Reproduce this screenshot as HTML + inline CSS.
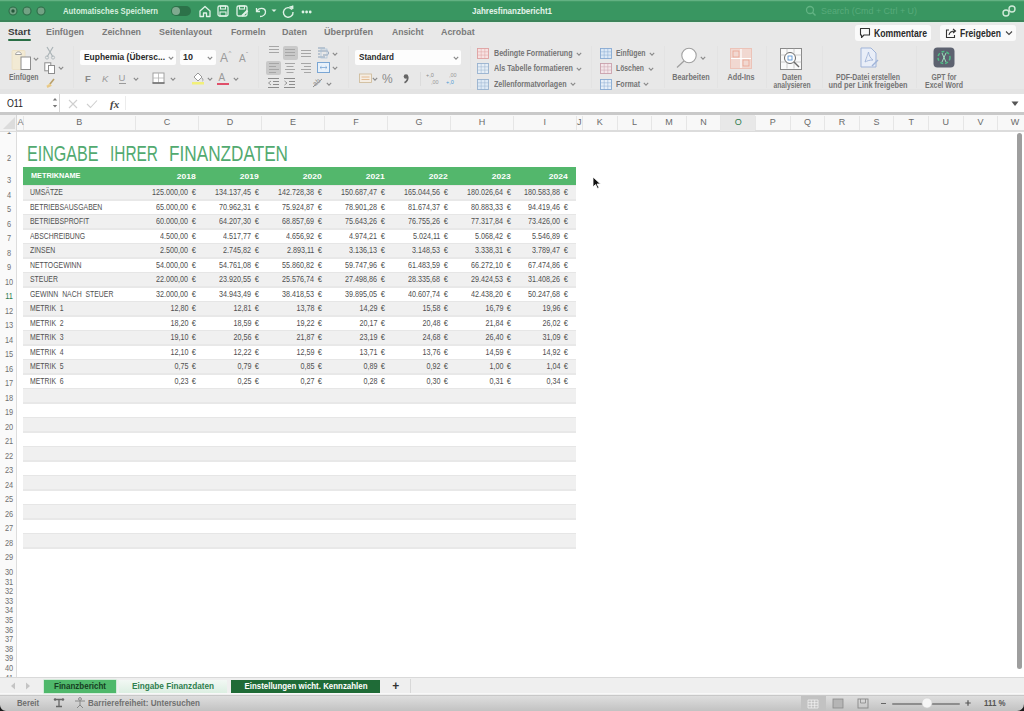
<!DOCTYPE html><html><head><meta charset="utf-8"><title>Jahresfinanzbericht1</title><style>
*{box-sizing:border-box}
html,body{margin:0;padding:0}
body{width:1024px;height:711px;overflow:hidden;position:relative;background:#fff;font-family:"Liberation Sans",sans-serif;color:#333}
.a{position:absolute}
.t{position:absolute;white-space:pre;line-height:1}
svg{position:absolute;overflow:visible}
</style></head><body>
<div class="a" style="left:0px;top:0px;width:1024px;height:22px;background:#399661;"></div>
<div class="a" style="left:0px;top:0px;width:1024px;height:1px;background:#62b182;"></div>
<div class="a" style="left:0px;top:1px;width:1024px;height:1px;background:#449c68;"></div>
<div class="a" style="left:0px;top:20px;width:1024px;height:1.5px;background:#3c835a;"></div>
<svg style="left:7px;top:5px;" width="12" height="12" viewBox="0 0 12 12"><circle cx="6" cy="6" r="4" fill="#72a284" stroke="#2e6c48" stroke-width="1.1"/><circle cx="6" cy="6" r="1.7" fill="#24573a"/></svg>
<svg style="left:21px;top:5px;" width="12" height="12" viewBox="0 0 12 12"><circle cx="6" cy="6" r="4" fill="#72a284" stroke="#2e6c48" stroke-width="1.1"/></svg>
<svg style="left:35px;top:5px;" width="12" height="12" viewBox="0 0 12 12"><circle cx="6" cy="6" r="4" fill="#72a284" stroke="#2e6c48" stroke-width="1.1"/></svg>
<div class="t" style="top:6.95px;font-size:8.5px;color:#d6efdf;font-weight:bold;left:63px;transform:scaleX(0.91);transform-origin:left center;">Automatisches Speichern</div>
<div class="a" style="left:171px;top:6px;width:20px;height:10px;background:#2c7249;border-radius:5px;"></div>
<svg style="left:171px;top:6px;" width="20" height="10" viewBox="0 0 20 10"><circle cx="5" cy="5" r="4" fill="#7faa8f"/></svg>
<svg style="left:198px;top:4px;" width="14" height="14" viewBox="0 0 14 14"><path d="M2 7 L7 2.5 L12 7 V12.5 H8.5 V9 H5.5 V12.5 H2 Z" fill="none" stroke="#dff2e6" stroke-width="1.3" stroke-linejoin="round"/></svg>
<svg style="left:216px;top:4px;" width="14" height="14" viewBox="0 0 14 14"><rect x="2" y="2" width="10" height="10" rx="1.5" fill="none" stroke="#dff2e6" stroke-width="1.3"/><rect x="4.5" y="2" width="5" height="3" fill="none" stroke="#dff2e6" stroke-width="1.1"/><rect x="4" y="8" width="6" height="4" fill="none" stroke="#dff2e6" stroke-width="1.1"/></svg>
<svg style="left:235px;top:4px;" width="14" height="14" viewBox="0 0 14 14"><rect x="2" y="2" width="10" height="10" rx="1.5" fill="none" stroke="#dff2e6" stroke-width="1.3"/><rect x="4.5" y="2" width="5" height="3" fill="none" stroke="#dff2e6" stroke-width="1.1"/><path d="M7 12 L12.5 6.5" stroke="#dff2e6" stroke-width="2.2"/></svg>
<svg style="left:253px;top:4px;" width="16" height="14" viewBox="0 0 16 14"><path d="M3.5 4 V7.5 H7" fill="none" stroke="#dff2e6" stroke-width="1.3"/><path d="M4 7 C6 3.5 12 3.5 12.5 7.5 C12.8 10.5 10 12.5 7 12.5" fill="none" stroke="#dff2e6" stroke-width="1.3"/></svg>
<svg style="left:271px;top:9px;" width="6" height="4" viewBox="0 0 6 4"><path d="M0.5 0.5 L3 3 L5.5 0.5 Z" fill="#dff2e6"/></svg>
<svg style="left:281px;top:4px;" width="14" height="14" viewBox="0 0 14 14"><path d="M11 5.5 A4.8 4.8 0 1 0 12 8" fill="none" stroke="#dff2e6" stroke-width="1.4"/><path d="M8.5 2.5 L12 5 L12 1.5" fill="#dff2e6" stroke="#dff2e6" stroke-width="0.8"/></svg>
<svg style="left:300px;top:9.5px;" width="14" height="4" viewBox="0 0 14 4"><circle cx="3" cy="2" r="1.4" fill="#dff2e6"/><circle cx="6.6" cy="2" r="1.4" fill="#dff2e6"/><circle cx="10.2" cy="2" r="1.4" fill="#dff2e6"/></svg>
<div class="t" style="top:7.00px;font-size:8.5px;color:#e4f3ea;font-weight:bold;left:471.6px;transform:scaleX(0.9408);transform-origin:left center;">Jahresfinanzbericht1</div>
<svg style="left:805px;top:5px;" width="12" height="12" viewBox="0 0 12 12"><circle cx="5" cy="5" r="3.5" fill="none" stroke="#62b383" stroke-width="1.3"/><path d="M7.5 7.5 L10.5 10.5" stroke="#62b383" stroke-width="1.4"/></svg>
<div class="t" style="top:7.00px;font-size:8.5px;color:#58ab7b;font-weight:normal;left:821px;transform:scaleX(1.0476);transform-origin:left center;">Search (Cmd + Ctrl + U)</div>
<svg style="left:1001px;top:4px;" width="16" height="14" viewBox="0 0 16 14"><circle cx="5" cy="9" r="3" fill="none" stroke="#cfe9d8" stroke-width="1.4"/><circle cx="11" cy="5" r="3" fill="none" stroke="#cfe9d8" stroke-width="1.4"/></svg>
<div class="a" style="left:0px;top:22px;width:1024px;height:67px;background:#e8e8e8;"></div>
<div class="a" style="left:0px;top:21.5px;width:1024px;height:1.5px;background:#e0eee5;"></div>
<div class="a" style="left:0px;top:88.5px;width:1024px;height:6px;background:#e3e3e3;"></div>
<div class="t" style="top:26.70px;font-size:9.5px;color:#3d3d3d;font-weight:bold;left:8px;transform:scaleX(1.039);transform-origin:left center;">Start</div>
<div class="t" style="top:26.70px;font-size:9.5px;color:#7a7a7a;font-weight:bold;left:46px;transform:scaleX(0.935);transform-origin:left center;">Einfügen</div>
<div class="t" style="top:26.70px;font-size:9.5px;color:#7a7a7a;font-weight:bold;left:102px;transform:scaleX(0.9352);transform-origin:left center;">Zeichnen</div>
<div class="t" style="top:26.70px;font-size:9.5px;color:#7a7a7a;font-weight:bold;left:159px;transform:scaleX(0.9381);transform-origin:left center;">Seitenlayout</div>
<div class="t" style="top:26.70px;font-size:9.5px;color:#7a7a7a;font-weight:bold;left:230.5px;transform:scaleX(0.9204);transform-origin:left center;">Formeln</div>
<div class="t" style="top:26.70px;font-size:9.5px;color:#7a7a7a;font-weight:bold;left:282px;transform:scaleX(0.9467);transform-origin:left center;">Daten</div>
<div class="t" style="top:26.70px;font-size:9.5px;color:#7a7a7a;font-weight:bold;left:324px;transform:scaleX(0.957);transform-origin:left center;">Überprüfen</div>
<div class="t" style="top:26.70px;font-size:9.5px;color:#7a7a7a;font-weight:bold;left:391.5px;transform:scaleX(0.904);transform-origin:left center;">Ansicht</div>
<div class="t" style="top:26.70px;font-size:9.5px;color:#7a7a7a;font-weight:bold;left:441px;transform:scaleX(0.9358);transform-origin:left center;">Acrobat</div>
<div class="a" style="left:8px;top:39.2px;width:22.5px;height:2px;background:#2a6e45;border-radius:1px;"></div>
<div class="a" style="left:854.5px;top:25px;width:76px;height:15.5px;background:#fafafa;border-radius:3px;"></div>
<div class="a" style="left:939.5px;top:25px;width:76px;height:15.5px;background:#fafafa;border-radius:3px;"></div>
<svg style="left:859px;top:27px;" width="12" height="12" viewBox="0 0 12 12"><path d="M1.5 1.5 H10.5 V8 H5 L2.5 10.5 V8 H1.5 Z" fill="none" stroke="#333" stroke-width="1.1" stroke-linejoin="round"/></svg>
<div class="t" style="top:29.30px;font-size:10px;color:#2a2a2a;font-weight:bold;left:874px;transform:scaleX(0.8669);transform-origin:left center;">Kommentare</div>
<svg style="left:945px;top:27px;" width="12" height="12" viewBox="0 0 12 12"><path d="M4 3 H1.5 V10.5 H9.5 V8" fill="none" stroke="#333" stroke-width="1.1"/><path d="M4 8 C4.5 5 6.5 4 10 4 M8 2 L10.5 4 L8 6" fill="none" stroke="#333" stroke-width="1.1"/></svg>
<div class="t" style="top:29.30px;font-size:10px;color:#2a2a2a;font-weight:bold;left:960px;transform:scaleX(0.8578);transform-origin:left center;">Freigeben</div>
<svg style="left:1005px;top:30px;" width="8" height="6" viewBox="0 0 8 6"><path d="M1 1.5 L4 4.5 L7 1.5" fill="none" stroke="#444" stroke-width="1.1"/></svg>
<svg style="left:10px;top:48px;" width="24" height="24" viewBox="0 0 24 24"><rect x="2" y="2.5" width="13" height="19" rx="1" fill="#f2ead4" stroke="#ece0c2" stroke-width="0.8"/><path d="M5.5 6.5 C6 3 11 3 11.5 6.5 Z" fill="#fff" stroke="#9a9a9a" stroke-width="0.9"/><rect x="11" y="9" width="9.5" height="12.5" fill="#fff" stroke="#8d8d8d" stroke-width="1"/></svg>
<svg style="left:33px;top:57px;" width="6" height="4" viewBox="0 0 6 4"><path d="M0.8 0.8 L3 3.2 L5.2 0.8" fill="none" stroke="#8a8a8a" stroke-width="1.1"/></svg>
<div class="t" style="top:73.20px;font-size:9px;color:#747474;font-weight:bold;left:8.5px;transform:scaleX(0.7662);transform-origin:left center;">Einfügen</div>
<svg style="left:44px;top:46px;" width="12" height="14" viewBox="0 0 12 14"><path d="M3 1 L9 11 M9 1 L3 11" stroke="#aab3b6" stroke-width="1.2"/><circle cx="3" cy="11.5" r="1.6" fill="none" stroke="#b5bdc0"/><circle cx="9" cy="11.5" r="1.6" fill="none" stroke="#b5bdc0"/></svg>
<svg style="left:44px;top:62px;" width="14" height="12" viewBox="0 0 14 12"><rect x="0.8" y="0.8" width="6" height="8" fill="#fff" stroke="#8d8d8d" stroke-width="1"/><rect x="4.5" y="3.5" width="6" height="8" fill="#fff" stroke="#8d8d8d" stroke-width="1"/></svg>
<svg style="left:58px;top:66px;" width="6" height="4" viewBox="0 0 6 4"><path d="M0.8 0.8 L3 3.2 L5.2 0.8" fill="none" stroke="#8a8a8a" stroke-width="1.1"/></svg>
<svg style="left:44px;top:77px;" width="13" height="12" viewBox="0 0 13 12"><path d="M2 9 L6 6 L8 9 Z" fill="#f0d9a0"/><path d="M6 7 L10 2" stroke="#b9a06a" stroke-width="1.6"/><path d="M3 10 L7 8" stroke="#e8c887" stroke-width="2"/></svg>
<div class="a" style="left:72.5px;top:46px;width:1px;height:42px;background:#e3e3e3;"></div>
<div class="a" style="left:80px;top:49.5px;width:96px;height:15px;background:#fdfdfd;border-radius:2px;"></div>
<div class="t" style="top:52.00px;font-size:9.5px;color:#2a2a2a;font-weight:bold;left:84px;transform:scaleX(0.8868);transform-origin:left center;">Euphemia (Übersc...</div>
<svg style="left:168px;top:55.5px;" width="6" height="4" viewBox="0 0 6 4"><path d="M0.8 0.8 L3 3.2 L5.2 0.8" fill="none" stroke="#888" stroke-width="1.1"/></svg>
<div class="a" style="left:179.5px;top:49.5px;width:36px;height:15px;background:#fdfdfd;border-radius:2px;"></div>
<div class="t" style="top:52.00px;font-size:9.5px;color:#2a2a2a;font-weight:bold;left:183px;transform:scaleX(0.9453);transform-origin:left center;">10</div>
<svg style="left:207px;top:55.5px;" width="6" height="4" viewBox="0 0 6 4"><path d="M0.8 0.8 L3 3.2 L5.2 0.8" fill="none" stroke="#888" stroke-width="1.1"/></svg>
<div class="t" style="top:52.00px;font-size:12px;color:#9a9a9a;font-weight:normal;left:220px;">A</div>
<div class="t" style="top:49.50px;font-size:6px;color:#9a9a9a;font-weight:normal;left:228.5px;">^</div>
<div class="t" style="top:54.00px;font-size:10px;color:#9a9a9a;font-weight:normal;left:239px;">A</div>
<div class="t" style="top:50.50px;font-size:6px;color:#9a9a9a;font-weight:normal;left:246px;">ˇ</div>
<div class="t" style="top:73.50px;font-size:9.5px;color:#8a8a8a;font-weight:bold;left:85px;">F</div>
<div class="t" style="top:73.50px;font-size:9.5px;color:#9a9a9a;font-weight:normal;font-style:italic;left:102px;">K</div>
<div class="t" style="top:72.50px;font-size:9.5px;color:#9a9a9a;font-weight:normal;left:118.5px;">U</div>
<div class="a" style="left:118.5px;top:83px;width:7px;height:1px;background:#9a9a9a;"></div>
<svg style="left:133px;top:77px;" width="6" height="4" viewBox="0 0 6 4"><path d="M0.8 0.8 L3 3.2 L5.2 0.8" fill="none" stroke="#8a8a8a" stroke-width="1.1"/></svg>
<svg style="left:152px;top:72px;" width="14" height="12" viewBox="0 0 14 12"><rect x="1" y="1" width="11" height="10" fill="#fff" stroke="#9a9a9a" stroke-width="0.9"/><path d="M6.5 1 V11 M1 6 H12" stroke="#b5b5b5" stroke-width="0.8"/><path d="M0.5 11 H12.5" stroke="#666" stroke-width="1.4"/></svg>
<svg style="left:170px;top:77px;" width="6" height="4" viewBox="0 0 6 4"><path d="M0.8 0.8 L3 3.2 L5.2 0.8" fill="none" stroke="#8a8a8a" stroke-width="1.1"/></svg>
<svg style="left:191px;top:71px;" width="14" height="14" viewBox="0 0 14 14"><path d="M3 6 L7 2 L11 6 L7 10 Z" fill="#fff" stroke="#9a9a9a" stroke-width="1"/><path d="M11 7 C12 8.5 12.5 9.5 11.5 10" stroke="#9a9a9a" fill="none"/><rect x="1" y="11" width="12" height="2.5" fill="#f2f07a"/></svg>
<svg style="left:207px;top:77px;" width="6" height="4" viewBox="0 0 6 4"><path d="M0.8 0.8 L3 3.2 L5.2 0.8" fill="none" stroke="#8a8a8a" stroke-width="1.1"/></svg>
<div class="t" style="top:73.00px;font-size:10px;color:#9a9a9a;font-weight:normal;left:218.5px;">A</div>
<div class="a" style="left:217px;top:83px;width:12px;height:2px;background:#e0506a;"></div>
<svg style="left:233px;top:77px;" width="6" height="4" viewBox="0 0 6 4"><path d="M0.8 0.8 L3 3.2 L5.2 0.8" fill="none" stroke="#8a8a8a" stroke-width="1.1"/></svg>
<div class="a" style="left:258px;top:46px;width:1px;height:42px;background:#e3e3e3;"></div>
<div class="a" style="left:283px;top:46px;width:15px;height:14px;background:#c9c9c9;border-radius:2px;"></div>
<div class="a" style="left:266px;top:61px;width:15px;height:14px;background:#c9c9c9;border-radius:2px;"></div>
<svg style="left:267px;top:44px;" width="14" height="14" viewBox="0 0 14 14"><rect x="2.0" y="2" width="10" height="1" fill="#a6a6a6"/><rect x="2.0" y="5" width="10" height="1" fill="#a6a6a6"/><rect x="2.0" y="8" width="10" height="1" fill="#a6a6a6"/></svg>
<svg style="left:283px;top:45px;" width="14" height="14" viewBox="0 0 14 14"><rect x="2.0" y="4" width="10" height="1" fill="#a6a6a6"/><rect x="2.0" y="7" width="10" height="1" fill="#a6a6a6"/><rect x="2.0" y="10" width="10" height="1" fill="#a6a6a6"/></svg>
<svg style="left:299px;top:44px;" width="14" height="14" viewBox="0 0 14 14"><rect x="2.0" y="6" width="10" height="1" fill="#a6a6a6"/><rect x="2.0" y="9" width="10" height="1" fill="#a6a6a6"/><rect x="2.0" y="12" width="10" height="1" fill="#a6a6a6"/></svg>
<svg style="left:267px;top:60px;" width="14" height="14" viewBox="0 0 14 14"><rect x="2" y="3" width="10" height="1" fill="#a6a6a6"/><rect x="2" y="6" width="7" height="1" fill="#a6a6a6"/><rect x="2" y="9" width="10" height="1" fill="#a6a6a6"/><rect x="2" y="12" width="7" height="1" fill="#a6a6a6"/></svg>
<svg style="left:283px;top:60px;" width="14" height="14" viewBox="0 0 14 14"><rect x="2.0" y="3" width="10" height="1" fill="#a6a6a6"/><rect x="3.5" y="6" width="7" height="1" fill="#a6a6a6"/><rect x="2.0" y="9" width="10" height="1" fill="#a6a6a6"/><rect x="3.5" y="12" width="7" height="1" fill="#a6a6a6"/></svg>
<svg style="left:299px;top:60px;" width="14" height="14" viewBox="0 0 14 14"><rect x="2" y="3" width="10" height="1" fill="#a6a6a6"/><rect x="5" y="6" width="7" height="1" fill="#a6a6a6"/><rect x="2" y="9" width="10" height="1" fill="#a6a6a6"/><rect x="5" y="12" width="7" height="1" fill="#a6a6a6"/></svg>
<svg style="left:267px;top:77px;" width="14" height="12" viewBox="0 0 14 12"><path d="M1 1.5 H12 M6 4.5 H12 M6 7.5 H12 M1 10.5 H12" stroke="#8c8c8c" stroke-width="1"/><path d="M4 4 L1.5 6 L4 8" fill="none" stroke="#8c8c8c" stroke-width="0.9"/></svg>
<svg style="left:283px;top:77px;" width="14" height="12" viewBox="0 0 14 12"><path d="M1 1.5 H12 M6 4.5 H12 M6 7.5 H12 M1 10.5 H12" stroke="#8c8c8c" stroke-width="1"/><path d="M1.5 4 L4 6 L1.5 8" fill="none" stroke="#8c8c8c" stroke-width="0.9"/></svg>
<svg style="left:316px;top:46px;" width="14" height="14" viewBox="0 0 14 14"><path d="M2 2 H9 M2 5 H11 C13 5 13 9 11 9 H7 M2 8 H4 M2 11 H9" fill="none" stroke="#8aa0b8" stroke-width="1"/><rect x="5" y="3" width="6" height="9" fill="none" stroke="#a8c0d8" stroke-width="0.7"/></svg>
<svg style="left:332px;top:51.5px;" width="6" height="4" viewBox="0 0 6 4"><path d="M0.8 0.8 L3 3.2 L5.2 0.8" fill="none" stroke="#8a8a8a" stroke-width="1.1"/></svg>
<svg style="left:317px;top:62px;" width="14" height="12" viewBox="0 0 14 12"><rect x="0.5" y="0.5" width="12" height="10" fill="#e8f1fa" stroke="#7aa6d4" stroke-width="1"/><path d="M3 5.5 H10 M3 5.5 L4.5 4.2 M3 5.5 L4.5 6.8 M10 5.5 L8.5 4.2 M10 5.5 L8.5 6.8" stroke="#7aa6d4" stroke-width="0.8" fill="none"/></svg>
<svg style="left:332px;top:66px;" width="6" height="4" viewBox="0 0 6 4"><path d="M0.8 0.8 L3 3.2 L5.2 0.8" fill="none" stroke="#8a8a8a" stroke-width="1.1"/></svg>
<svg style="left:311px;top:76px;" width="14" height="14" viewBox="0 0 14 14"><path d="M2 11 L11 3" stroke="#8c8c8c" stroke-width="1"/><text x="2" y="9" font-size="7" fill="#8c8c8c" font-family="Liberation Sans" transform="rotate(-40 5 7)">ab</text></svg>
<svg style="left:326px;top:82px;" width="6" height="4" viewBox="0 0 6 4"><path d="M0.8 0.8 L3 3.2 L5.2 0.8" fill="none" stroke="#8a8a8a" stroke-width="1.1"/></svg>
<div class="a" style="left:348px;top:46px;width:1px;height:42px;background:#e3e3e3;"></div>
<div class="a" style="left:355px;top:49.5px;width:106px;height:15px;background:#fdfdfd;border-radius:2px;"></div>
<div class="t" style="top:52.00px;font-size:9.5px;color:#2a2a2a;font-weight:bold;left:359px;transform:scaleX(0.8498);transform-origin:left center;">Standard</div>
<svg style="left:453px;top:55.5px;" width="6" height="4" viewBox="0 0 6 4"><path d="M0.8 0.8 L3 3.2 L5.2 0.8" fill="none" stroke="#888" stroke-width="1.1"/></svg>
<svg style="left:359px;top:73px;" width="14" height="11" viewBox="0 0 14 11"><rect x="0.5" y="1" width="12" height="8.5" fill="#f5ede3" stroke="#cdb896" stroke-width="0.8"/><path d="M2.5 4 H10.5 M2.5 6.5 H10.5" stroke="#e0b080" stroke-width="0.8"/></svg>
<svg style="left:372px;top:77px;" width="6" height="4" viewBox="0 0 6 4"><path d="M0.8 0.8 L3 3.2 L5.2 0.8" fill="none" stroke="#8a8a8a" stroke-width="1.1"/></svg>
<div class="t" style="top:73.00px;font-size:12px;color:#8a8a8a;font-weight:normal;left:382px;">%</div>
<svg style="left:402px;top:73px;" width="8" height="11" viewBox="0 0 8 11"><circle cx="4" cy="3.5" r="2.3" fill="#666"/><path d="M5.8 3.8 C6 6.5 5 8.5 2.5 9.8" fill="none" stroke="#666" stroke-width="1.6"/></svg>
<div class="a" style="left:420px;top:72px;width:1px;height:14px;background:#dcdcdc;"></div>
<svg style="left:426px;top:71px;" width="16" height="14" viewBox="0 0 16 14"><text x="0" y="6" font-size="5.5" fill="#8c8c8c" font-family="Liberation Sans">+,0</text><text x="5" y="12.5" font-size="5.5" fill="#9a9a9a" font-family="Liberation Sans">,00</text></svg>
<svg style="left:444px;top:71px;" width="16" height="14" viewBox="0 0 16 14"><text x="5" y="6" font-size="5.5" fill="#9a9a9a" font-family="Liberation Sans">,00</text><text x="2" y="12.5" font-size="5.5" fill="#4c9ad4" font-family="Liberation Sans">+,0</text></svg>
<div class="a" style="left:470px;top:46px;width:1px;height:42px;background:#e3e3e3;"></div>
<svg style="left:477px;top:47.5px;" width="12" height="11" viewBox="0 0 12 11"><rect x="0.5" y="0.5" width="11" height="10" fill="#f7e2e2" stroke="#dea0a0" stroke-width="0.9"/><path d="M0.5 3.8 H11.5 M0.5 7.1 H11.5 M4.2 0.5 V10.5 M7.8 0.5 V10.5" stroke="#dea0a0" stroke-width="0.5"/></svg>
<svg style="left:477px;top:63.0px;" width="12" height="11" viewBox="0 0 12 11"><rect x="0.5" y="0.5" width="11" height="10" fill="#e6eef6" stroke="#98b2cf" stroke-width="0.9"/><path d="M0.5 3.8 H11.5 M0.5 7.1 H11.5 M4.2 0.5 V10.5 M7.8 0.5 V10.5" stroke="#98b2cf" stroke-width="0.5"/></svg>
<svg style="left:477px;top:78.5px;" width="12" height="11" viewBox="0 0 12 11"><rect x="0.5" y="0.5" width="11" height="10" fill="#dde9f5" stroke="#98b2cf" stroke-width="0.9"/><path d="M0.5 3.8 H11.5 M0.5 7.1 H11.5 M4.2 0.5 V10.5 M7.8 0.5 V10.5" stroke="#98b2cf" stroke-width="0.5"/></svg>
<div class="t" style="top:49.30px;font-size:9px;color:#747474;font-weight:bold;left:493.5px;transform:scaleX(0.7928);transform-origin:left center;">Bedingte Formatierung</div>
<svg style="left:576px;top:51.5px;" width="6" height="4" viewBox="0 0 6 4"><path d="M0.8 0.8 L3 3.2 L5.2 0.8" fill="none" stroke="#8a8a8a" stroke-width="1.1"/></svg>
<div class="t" style="top:64.20px;font-size:9px;color:#747474;font-weight:bold;left:493.5px;transform:scaleX(0.799);transform-origin:left center;">Als Tabelle formatieren</div>
<svg style="left:576px;top:67px;" width="6" height="4" viewBox="0 0 6 4"><path d="M0.8 0.8 L3 3.2 L5.2 0.8" fill="none" stroke="#8a8a8a" stroke-width="1.1"/></svg>
<div class="t" style="top:79.80px;font-size:9px;color:#747474;font-weight:bold;left:493.5px;transform:scaleX(0.7921);transform-origin:left center;">Zellenformatvorlagen</div>
<svg style="left:570px;top:82.2px;" width="6" height="4" viewBox="0 0 6 4"><path d="M0.8 0.8 L3 3.2 L5.2 0.8" fill="none" stroke="#8a8a8a" stroke-width="1.1"/></svg>
<div class="a" style="left:591px;top:46px;width:1px;height:42px;background:#e3e3e3;"></div>
<svg style="left:600px;top:47.5px;" width="12" height="11" viewBox="0 0 12 11"><rect x="0.5" y="0.5" width="11" height="10" fill="#dbe8f6" stroke="#86a9d2" stroke-width="0.9"/><path d="M0.5 3.8 H11.5 M0.5 7.1 H11.5 M4.2 0.5 V10.5 M7.8 0.5 V10.5" stroke="#86a9d2" stroke-width="0.5"/></svg>
<svg style="left:600px;top:63.0px;" width="12" height="11" viewBox="0 0 12 11"><rect x="0.5" y="0.5" width="11" height="10" fill="#f3e6ea" stroke="#c9a0ad" stroke-width="0.9"/><path d="M0.5 3.8 H11.5 M0.5 7.1 H11.5 M4.2 0.5 V10.5 M7.8 0.5 V10.5" stroke="#c9a0ad" stroke-width="0.5"/></svg>
<svg style="left:600px;top:78.5px;" width="12" height="11" viewBox="0 0 12 11"><rect x="0.5" y="0.5" width="11" height="10" fill="#e7eff8" stroke="#86a9d2" stroke-width="0.9"/><path d="M0.5 3.8 H11.5 M0.5 7.1 H11.5 M4.2 0.5 V10.5 M7.8 0.5 V10.5" stroke="#86a9d2" stroke-width="0.5"/></svg>
<div class="t" style="top:49.30px;font-size:9px;color:#747474;font-weight:bold;left:616px;transform:scaleX(0.7662);transform-origin:left center;">Einfügen</div>
<svg style="left:649px;top:51.5px;" width="6" height="4" viewBox="0 0 6 4"><path d="M0.8 0.8 L3 3.2 L5.2 0.8" fill="none" stroke="#8a8a8a" stroke-width="1.1"/></svg>
<div class="t" style="top:64.20px;font-size:9px;color:#747474;font-weight:bold;left:616px;transform:scaleX(0.7564);transform-origin:left center;">Löschen</div>
<svg style="left:648px;top:67px;" width="6" height="4" viewBox="0 0 6 4"><path d="M0.8 0.8 L3 3.2 L5.2 0.8" fill="none" stroke="#8a8a8a" stroke-width="1.1"/></svg>
<div class="t" style="top:79.80px;font-size:9px;color:#747474;font-weight:bold;left:616px;transform:scaleX(0.7865);transform-origin:left center;">Format</div>
<svg style="left:643px;top:82.2px;" width="6" height="4" viewBox="0 0 6 4"><path d="M0.8 0.8 L3 3.2 L5.2 0.8" fill="none" stroke="#8a8a8a" stroke-width="1.1"/></svg>
<div class="a" style="left:664px;top:46px;width:1px;height:42px;background:#e3e3e3;"></div>
<svg style="left:674px;top:46px;" width="26" height="24" viewBox="0 0 26 24"><circle cx="15" cy="9.5" r="7.2" fill="#fff" stroke="#a0a0a0" stroke-width="1.1"/><path d="M10 15 L3 21.5" stroke="#a0a0a0" stroke-width="1.3"/></svg>
<svg style="left:700px;top:55.5px;" width="6" height="4" viewBox="0 0 6 4"><path d="M0.8 0.8 L3 3.2 L5.2 0.8" fill="none" stroke="#8a8a8a" stroke-width="1.1"/></svg>
<div class="t" style="top:73.20px;font-size:9px;color:#747474;font-weight:bold;left:691px;transform:translateX(-50%) scaleX(0.8059);transform-origin:center center;">Bearbeiten</div>
<div class="a" style="left:717px;top:46px;width:1px;height:42px;background:#e3e3e3;"></div>
<svg style="left:730px;top:48px;" width="22" height="21" viewBox="0 0 22 21"><rect x="0.5" y="0.5" width="21" height="20" fill="#f1d8d1" stroke="#ecc3b8" stroke-width="1"/><path d="M11 1 V20 M1 10.5 H21" stroke="#fff" stroke-width="1.2"/><rect x="3" y="3" width="6" height="6" fill="none" stroke="#e79f8a" stroke-width="0.7"/><rect x="13" y="12" width="6" height="6" fill="none" stroke="#e79f8a" stroke-width="0.7"/></svg>
<div class="t" style="top:73.20px;font-size:9px;color:#747474;font-weight:bold;left:741px;transform:translateX(-50%) scaleX(0.806);transform-origin:center center;">Add-Ins</div>
<div class="a" style="left:766px;top:46px;width:1px;height:42px;background:#e3e3e3;"></div>
<svg style="left:780px;top:47.5px;" width="22" height="22" viewBox="0 0 22 22"><rect x="0.5" y="0.5" width="21" height="21" fill="#fafafa" stroke="#8a8a8a" stroke-width="1"/><path d="M0.5 7 H21.5 M0.5 14 H21.5 M7 0.5 V20.5 M14 0.5 V20.5" stroke="#b0b0b0" stroke-width="0.6"/><circle cx="10" cy="10" r="5.5" fill="#fff" stroke="#6a6a6a" stroke-width="1"/><path d="M14 14 L19 19" stroke="#6a6a6a" stroke-width="1.4"/><rect x="8" y="8" width="4" height="4" fill="none" stroke="#4a8ad0" stroke-width="0.8"/></svg>
<div class="t" style="top:73.20px;font-size:9px;color:#747474;font-weight:bold;left:792px;transform:translateX(-50%) scaleX(0.7995);transform-origin:center center;">Daten</div>
<div class="t" style="top:81.40px;font-size:9px;color:#747474;font-weight:bold;left:792px;transform:translateX(-50%) scaleX(0.747);transform-origin:center center;">analysieren</div>
<div class="a" style="left:822px;top:46px;width:1px;height:42px;background:#e3e3e3;"></div>
<svg style="left:859px;top:47px;" width="20" height="22" viewBox="0 0 20 22"><path d="M2 1 H12 L17 6 V20 H2 Z" fill="#e9eef8" stroke="#9fb3d8" stroke-width="1"/><path d="M6 15 C8 9 9 7 9.5 5 C10 8 11 11 14 13 C10 13 8 14 6 15 Z" fill="none" stroke="#9fb3d8" stroke-width="0.9"/><path d="M13 19 L19 13" stroke="#9fb3d8" stroke-width="1.5"/></svg>
<div class="t" style="top:73.20px;font-size:9px;color:#747474;font-weight:bold;left:868px;transform:translateX(-50%) scaleX(0.7755);transform-origin:center center;">PDF-Datei erstellen</div>
<div class="t" style="top:81.40px;font-size:9px;color:#747474;font-weight:bold;left:868px;transform:translateX(-50%) scaleX(0.8143);transform-origin:center center;">und per Link freigeben</div>
<div class="a" style="left:916px;top:46px;width:1px;height:42px;background:#e3e3e3;"></div>
<svg style="left:933px;top:47px;" width="22" height="21" viewBox="0 0 22 21"><rect x="0.5" y="0.5" width="21" height="20" rx="4" fill="#5d6270"/><circle cx="11" cy="10.5" r="6" fill="none" stroke="#4fbd86" stroke-width="1.5" stroke-dasharray="3 2"/><path d="M9 6 L13 15 M13 6 L9 15" stroke="#9de0bd" stroke-width="1"/></svg>
<div class="t" style="top:73.20px;font-size:9px;color:#747474;font-weight:bold;left:944px;transform:translateX(-50%) scaleX(0.7576);transform-origin:center center;">GPT for</div>
<div class="t" style="top:81.40px;font-size:9px;color:#747474;font-weight:bold;left:944px;transform:translateX(-50%) scaleX(0.7777);transform-origin:center center;">Excel Word</div>
<div class="a" style="left:0px;top:94px;width:1024px;height:18px;background:#ffffff;"></div>
<div class="a" style="left:0px;top:112px;width:1024px;height:2.5px;background:#c9c9c9;"></div>
<div class="t" style="top:99.30px;font-size:10px;color:#222;font-weight:normal;left:6.5px;transform:scaleX(0.8805);transform-origin:left center;">O11</div>
<svg style="left:52px;top:97px;" width="6" height="12" viewBox="0 0 6 12"><path d="M0.8 3.5 L3 1 L5.2 3.5 Z M0.8 8 L3 10.5 L5.2 8 Z" fill="#777"/></svg>
<div class="a" style="left:58.5px;top:94px;width:1px;height:18px;background:#d5d5d5;"></div>
<div class="a" style="left:125px;top:96px;width:1px;height:14px;background:#ececec;"></div>
<svg style="left:68px;top:99px;" width="10" height="10" viewBox="0 0 10 10"><path d="M1 1 L9 9 M9 1 L1 9" stroke="#cfcfcf" stroke-width="1.1"/></svg>
<svg style="left:86px;top:99px;" width="12" height="10" viewBox="0 0 12 10"><path d="M1 5 L4.5 8.5 L11 1.5" fill="none" stroke="#cfcfcf" stroke-width="1.1"/></svg>
<div class="t" style="top:98.80px;font-size:11px;color:#444;font-weight:bold;font-style:italic;left:110px;font-family:'Liberation Serif',serif;">fx</div>
<svg style="left:1011px;top:101px;" width="8" height="6" viewBox="0 0 8 6"><path d="M0.5 0.5 L7.5 0.5 L4 5 Z" fill="#555"/></svg>
<div class="a" style="left:0px;top:131px;width:16.5px;height:546px;background:#fafafa;"></div>
<div class="a" style="left:16px;top:131px;width:1px;height:546px;background:#dddddd;"></div>
<div class="t" style="top:126.50px;font-size:9px;color:#707070;font-weight:normal;left:8.5px;transform:translateX(-50%) scaleX(0.82);transform-origin:center center;">1</div>
<div class="t" style="top:154.00px;font-size:9px;color:#707070;font-weight:normal;left:8.5px;transform:translateX(-50%) scaleX(0.82);transform-origin:center center;">2</div>
<div class="t" style="top:176.00px;font-size:9px;color:#707070;font-weight:normal;left:8.5px;transform:translateX(-50%) scaleX(0.82);transform-origin:center center;">3</div>
<div class="t" style="top:190.60px;font-size:9px;color:#707070;font-weight:normal;left:8.5px;transform:translateX(-50%) scaleX(0.82);transform-origin:center center;">4</div>
<div class="t" style="top:205.10px;font-size:9px;color:#707070;font-weight:normal;left:8.5px;transform:translateX(-50%) scaleX(0.82);transform-origin:center center;">5</div>
<div class="t" style="top:219.60px;font-size:9px;color:#707070;font-weight:normal;left:8.5px;transform:translateX(-50%) scaleX(0.82);transform-origin:center center;">6</div>
<div class="t" style="top:234.10px;font-size:9px;color:#707070;font-weight:normal;left:8.5px;transform:translateX(-50%) scaleX(0.82);transform-origin:center center;">7</div>
<div class="t" style="top:248.60px;font-size:9px;color:#707070;font-weight:normal;left:8.5px;transform:translateX(-50%) scaleX(0.82);transform-origin:center center;">8</div>
<div class="t" style="top:263.10px;font-size:9px;color:#707070;font-weight:normal;left:8.5px;transform:translateX(-50%) scaleX(0.82);transform-origin:center center;">9</div>
<div class="t" style="top:277.60px;font-size:9px;color:#707070;font-weight:normal;left:8.5px;transform:translateX(-50%) scaleX(0.82);transform-origin:center center;">10</div>
<div class="t" style="top:292.10px;font-size:9px;color:#2e7d4f;font-weight:normal;left:8.5px;transform:translateX(-50%) scaleX(0.82);transform-origin:center center;">11</div>
<div class="t" style="top:306.60px;font-size:9px;color:#707070;font-weight:normal;left:8.5px;transform:translateX(-50%) scaleX(0.82);transform-origin:center center;">12</div>
<div class="t" style="top:321.10px;font-size:9px;color:#707070;font-weight:normal;left:8.5px;transform:translateX(-50%) scaleX(0.82);transform-origin:center center;">13</div>
<div class="t" style="top:335.60px;font-size:9px;color:#707070;font-weight:normal;left:8.5px;transform:translateX(-50%) scaleX(0.82);transform-origin:center center;">14</div>
<div class="t" style="top:350.10px;font-size:9px;color:#707070;font-weight:normal;left:8.5px;transform:translateX(-50%) scaleX(0.82);transform-origin:center center;">15</div>
<div class="t" style="top:364.60px;font-size:9px;color:#707070;font-weight:normal;left:8.5px;transform:translateX(-50%) scaleX(0.82);transform-origin:center center;">16</div>
<div class="t" style="top:379.10px;font-size:9px;color:#707070;font-weight:normal;left:8.5px;transform:translateX(-50%) scaleX(0.82);transform-origin:center center;">17</div>
<div class="t" style="top:393.60px;font-size:9px;color:#707070;font-weight:normal;left:8.5px;transform:translateX(-50%) scaleX(0.82);transform-origin:center center;">18</div>
<div class="t" style="top:408.10px;font-size:9px;color:#707070;font-weight:normal;left:8.5px;transform:translateX(-50%) scaleX(0.82);transform-origin:center center;">19</div>
<div class="t" style="top:422.60px;font-size:9px;color:#707070;font-weight:normal;left:8.5px;transform:translateX(-50%) scaleX(0.82);transform-origin:center center;">20</div>
<div class="t" style="top:437.10px;font-size:9px;color:#707070;font-weight:normal;left:8.5px;transform:translateX(-50%) scaleX(0.82);transform-origin:center center;">21</div>
<div class="t" style="top:451.60px;font-size:9px;color:#707070;font-weight:normal;left:8.5px;transform:translateX(-50%) scaleX(0.82);transform-origin:center center;">22</div>
<div class="t" style="top:466.10px;font-size:9px;color:#707070;font-weight:normal;left:8.5px;transform:translateX(-50%) scaleX(0.82);transform-origin:center center;">23</div>
<div class="t" style="top:480.60px;font-size:9px;color:#707070;font-weight:normal;left:8.5px;transform:translateX(-50%) scaleX(0.82);transform-origin:center center;">24</div>
<div class="t" style="top:495.10px;font-size:9px;color:#707070;font-weight:normal;left:8.5px;transform:translateX(-50%) scaleX(0.82);transform-origin:center center;">25</div>
<div class="t" style="top:509.60px;font-size:9px;color:#707070;font-weight:normal;left:8.5px;transform:translateX(-50%) scaleX(0.82);transform-origin:center center;">26</div>
<div class="t" style="top:524.10px;font-size:9px;color:#707070;font-weight:normal;left:8.5px;transform:translateX(-50%) scaleX(0.82);transform-origin:center center;">27</div>
<div class="t" style="top:538.60px;font-size:9px;color:#707070;font-weight:normal;left:8.5px;transform:translateX(-50%) scaleX(0.82);transform-origin:center center;">28</div>
<div class="t" style="top:553.10px;font-size:9px;color:#707070;font-weight:normal;left:8.5px;transform:translateX(-50%) scaleX(0.82);transform-origin:center center;">29</div>
<div class="t" style="top:567.90px;font-size:9px;color:#707070;font-weight:normal;left:8.5px;transform:translateX(-50%) scaleX(0.82);transform-origin:center center;">30</div>
<div class="t" style="top:577.50px;font-size:9px;color:#707070;font-weight:normal;left:8.5px;transform:translateX(-50%) scaleX(0.82);transform-origin:center center;">31</div>
<div class="t" style="top:587.10px;font-size:9px;color:#707070;font-weight:normal;left:8.5px;transform:translateX(-50%) scaleX(0.82);transform-origin:center center;">32</div>
<div class="t" style="top:596.70px;font-size:9px;color:#707070;font-weight:normal;left:8.5px;transform:translateX(-50%) scaleX(0.82);transform-origin:center center;">33</div>
<div class="t" style="top:606.30px;font-size:9px;color:#707070;font-weight:normal;left:8.5px;transform:translateX(-50%) scaleX(0.82);transform-origin:center center;">34</div>
<div class="t" style="top:615.90px;font-size:9px;color:#707070;font-weight:normal;left:8.5px;transform:translateX(-50%) scaleX(0.82);transform-origin:center center;">35</div>
<div class="t" style="top:625.50px;font-size:9px;color:#707070;font-weight:normal;left:8.5px;transform:translateX(-50%) scaleX(0.82);transform-origin:center center;">36</div>
<div class="t" style="top:635.10px;font-size:9px;color:#707070;font-weight:normal;left:8.5px;transform:translateX(-50%) scaleX(0.82);transform-origin:center center;">37</div>
<div class="t" style="top:644.70px;font-size:9px;color:#707070;font-weight:normal;left:8.5px;transform:translateX(-50%) scaleX(0.82);transform-origin:center center;">38</div>
<div class="t" style="top:654.30px;font-size:9px;color:#707070;font-weight:normal;left:8.5px;transform:translateX(-50%) scaleX(0.82);transform-origin:center center;">39</div>
<div class="t" style="top:663.90px;font-size:9px;color:#707070;font-weight:normal;left:8.5px;transform:translateX(-50%) scaleX(0.82);transform-origin:center center;">40</div>
<div class="t" style="top:673.50px;font-size:9px;color:#707070;font-weight:normal;left:8.5px;transform:translateX(-50%) scaleX(0.82);transform-origin:center center;">41</div>
<div class="a" style="left:0px;top:114.5px;width:1024px;height:16.5px;background:#f8f8f8;"></div>
<div class="a" style="left:0px;top:130px;width:1024px;height:1.5px;background:#dcdcdc;"></div>
<div class="a" style="left:720px;top:114.5px;width:35px;height:16px;background:#e8e8e8;"></div>
<div class="a" style="left:22.5px;top:116px;width:1px;height:14px;background:#e6e6e6;"></div>
<div class="t" style="top:117.80px;font-size:9px;color:#7a7a7a;font-weight:normal;left:17.5px;">A</div>
<div class="a" style="left:135.0px;top:116px;width:1px;height:14px;background:#e6e6e6;"></div>
<div class="t" style="top:117.80px;font-size:9px;color:#6a6a6a;font-weight:normal;left:79.25px;transform:translateX(-50%);transform-origin:left center;">B</div>
<div class="a" style="left:198.0px;top:116px;width:1px;height:14px;background:#e6e6e6;"></div>
<div class="t" style="top:117.80px;font-size:9px;color:#6a6a6a;font-weight:normal;left:167.0px;transform:translateX(-50%);transform-origin:left center;">C</div>
<div class="a" style="left:261.0px;top:116px;width:1px;height:14px;background:#e6e6e6;"></div>
<div class="t" style="top:117.80px;font-size:9px;color:#6a6a6a;font-weight:normal;left:230.0px;transform:translateX(-50%);transform-origin:left center;">D</div>
<div class="a" style="left:324.0px;top:116px;width:1px;height:14px;background:#e6e6e6;"></div>
<div class="t" style="top:117.80px;font-size:9px;color:#6a6a6a;font-weight:normal;left:293.0px;transform:translateX(-50%);transform-origin:left center;">E</div>
<div class="a" style="left:387.0px;top:116px;width:1px;height:14px;background:#e6e6e6;"></div>
<div class="t" style="top:117.80px;font-size:9px;color:#6a6a6a;font-weight:normal;left:356.0px;transform:translateX(-50%);transform-origin:left center;">F</div>
<div class="a" style="left:450.0px;top:116px;width:1px;height:14px;background:#e6e6e6;"></div>
<div class="t" style="top:117.80px;font-size:9px;color:#6a6a6a;font-weight:normal;left:419.0px;transform:translateX(-50%);transform-origin:left center;">G</div>
<div class="a" style="left:513.0px;top:116px;width:1px;height:14px;background:#e6e6e6;"></div>
<div class="t" style="top:117.80px;font-size:9px;color:#6a6a6a;font-weight:normal;left:482.0px;transform:translateX(-50%);transform-origin:left center;">H</div>
<div class="a" style="left:575.5px;top:116px;width:1px;height:14px;background:#e6e6e6;"></div>
<div class="t" style="top:117.80px;font-size:9px;color:#6a6a6a;font-weight:normal;left:544.75px;transform:translateX(-50%);transform-origin:left center;">I</div>
<div class="a" style="left:582.0px;top:116px;width:1px;height:14px;background:#e6e6e6;"></div>
<div class="t" style="top:117.80px;font-size:9px;color:#6a6a6a;font-weight:normal;left:579.25px;transform:translateX(-50%);transform-origin:left center;">J</div>
<div class="a" style="left:616.6px;top:116px;width:1px;height:14px;background:#e6e6e6;"></div>
<div class="t" style="top:117.80px;font-size:9px;color:#6a6a6a;font-weight:normal;left:599.8px;transform:translateX(-50%);transform-origin:left center;">K</div>
<div class="a" style="left:651.2px;top:116px;width:1px;height:14px;background:#e6e6e6;"></div>
<div class="t" style="top:117.80px;font-size:9px;color:#6a6a6a;font-weight:normal;left:634.4000000000001px;transform:translateX(-50%);transform-origin:left center;">L</div>
<div class="a" style="left:685.8000000000001px;top:116px;width:1px;height:14px;background:#e6e6e6;"></div>
<div class="t" style="top:117.80px;font-size:9px;color:#6a6a6a;font-weight:normal;left:669.0px;transform:translateX(-50%);transform-origin:left center;">M</div>
<div class="a" style="left:720.4000000000001px;top:116px;width:1px;height:14px;background:#e6e6e6;"></div>
<div class="t" style="top:117.80px;font-size:9px;color:#6a6a6a;font-weight:normal;left:703.6000000000001px;transform:translateX(-50%);transform-origin:left center;">N</div>
<div class="a" style="left:755.0000000000001px;top:116px;width:1px;height:14px;background:#e6e6e6;"></div>
<div class="t" style="top:117.80px;font-size:9px;color:#2e7d4f;font-weight:normal;left:738.2px;transform:translateX(-50%);transform-origin:left center;">O</div>
<div class="a" style="left:789.6000000000001px;top:116px;width:1px;height:14px;background:#e6e6e6;"></div>
<div class="t" style="top:117.80px;font-size:9px;color:#6a6a6a;font-weight:normal;left:772.8000000000002px;transform:translateX(-50%);transform-origin:left center;">P</div>
<div class="a" style="left:824.2000000000002px;top:116px;width:1px;height:14px;background:#e6e6e6;"></div>
<div class="t" style="top:117.80px;font-size:9px;color:#6a6a6a;font-weight:normal;left:807.4000000000001px;transform:translateX(-50%);transform-origin:left center;">Q</div>
<div class="a" style="left:858.8000000000002px;top:116px;width:1px;height:14px;background:#e6e6e6;"></div>
<div class="t" style="top:117.80px;font-size:9px;color:#6a6a6a;font-weight:normal;left:842.0000000000002px;transform:translateX(-50%);transform-origin:left center;">R</div>
<div class="a" style="left:893.4000000000002px;top:116px;width:1px;height:14px;background:#e6e6e6;"></div>
<div class="t" style="top:117.80px;font-size:9px;color:#6a6a6a;font-weight:normal;left:876.6000000000001px;transform:translateX(-50%);transform-origin:left center;">S</div>
<div class="a" style="left:928.0000000000002px;top:116px;width:1px;height:14px;background:#e6e6e6;"></div>
<div class="t" style="top:117.80px;font-size:9px;color:#6a6a6a;font-weight:normal;left:911.2000000000003px;transform:translateX(-50%);transform-origin:left center;">T</div>
<div class="a" style="left:962.6000000000003px;top:116px;width:1px;height:14px;background:#e6e6e6;"></div>
<div class="t" style="top:117.80px;font-size:9px;color:#6a6a6a;font-weight:normal;left:945.8000000000002px;transform:translateX(-50%);transform-origin:left center;">U</div>
<div class="a" style="left:997.2000000000003px;top:116px;width:1px;height:14px;background:#e6e6e6;"></div>
<div class="t" style="top:117.80px;font-size:9px;color:#6a6a6a;font-weight:normal;left:980.4000000000003px;transform:translateX(-50%);transform-origin:left center;">V</div>
<div class="a" style="left:1031.8000000000002px;top:116px;width:1px;height:14px;background:#e6e6e6;"></div>
<div class="t" style="top:117.80px;font-size:9px;color:#6a6a6a;font-weight:normal;left:1015.0000000000002px;transform:translateX(-50%);transform-origin:left center;">W</div>
<div class="a" style="left:0px;top:114.5px;width:16.5px;height:16.5px;background:#f1f1f1;"></div>
<svg style="left:2px;top:117px;" width="14" height="13" viewBox="0 0 14 13"><path d="M13 0 V12 H1 Z" fill="#dcdcdc"/></svg>
<div class="a" style="left:16px;top:114.5px;width:1px;height:16.5px;background:#d6d6d6;"></div>
<div class="t" style="top:142.80px;font-size:22.4px;color:#52aa70;font-weight:normal;left:26.5px;transform:scaleX(0.7183);transform-origin:left center;">EINGABE</div>
<div class="t" style="top:142.80px;font-size:22.4px;color:#52aa70;font-weight:normal;left:110px;transform:scaleX(0.6889);transform-origin:left center;">IHRER</div>
<div class="t" style="top:142.80px;font-size:22.4px;color:#52aa70;font-weight:normal;left:169px;transform:scaleX(0.7674);transform-origin:left center;">FINANZDATEN</div>
<div class="a" style="left:23px;top:166.6px;width:553px;height:18px;background:#53b76c;"></div>
<div class="t" style="top:172.30px;font-size:7.5px;color:#ffffff;font-weight:bold;left:30.5px;transform:scaleX(0.9736);transform-origin:left center;">METRIKNAME</div>
<div class="t" style="top:172.50px;font-size:8px;color:#ffffff;font-weight:bold;right:828.3px;transform:scaleX(1.0676);transform-origin:right center;">2018</div>
<div class="t" style="top:172.50px;font-size:8px;color:#ffffff;font-weight:bold;right:765.3px;transform:scaleX(1.0676);transform-origin:right center;">2019</div>
<div class="t" style="top:172.50px;font-size:8px;color:#ffffff;font-weight:bold;right:702.3px;transform:scaleX(1.0676);transform-origin:right center;">2020</div>
<div class="t" style="top:172.50px;font-size:8px;color:#ffffff;font-weight:bold;right:639.3px;transform:scaleX(1.0676);transform-origin:right center;">2021</div>
<div class="t" style="top:172.50px;font-size:8px;color:#ffffff;font-weight:bold;right:576.3px;transform:scaleX(1.0676);transform-origin:right center;">2022</div>
<div class="t" style="top:172.50px;font-size:8px;color:#ffffff;font-weight:bold;right:513.3px;transform:scaleX(1.0676);transform-origin:right center;">2023</div>
<div class="t" style="top:172.50px;font-size:8px;color:#ffffff;font-weight:bold;right:456.29999999999995px;transform:scaleX(1.0676);transform-origin:right center;">2024</div>
<div class="a" style="left:23px;top:184.9px;width:553px;height:16px;background:#f0f0f0;"></div>
<div class="a" style="left:23px;top:184.9px;width:553px;height:1.2px;background:#e6e6e6;"></div>
<div class="a" style="left:23px;top:199.1px;width:553px;height:1.8px;background:#e8e8e8;"></div>
<div class="a" style="left:23px;top:213.9px;width:553px;height:16px;background:#f0f0f0;"></div>
<div class="a" style="left:23px;top:213.9px;width:553px;height:1.2px;background:#e6e6e6;"></div>
<div class="a" style="left:23px;top:228.1px;width:553px;height:1.8px;background:#e8e8e8;"></div>
<div class="a" style="left:23px;top:242.9px;width:553px;height:16px;background:#f0f0f0;"></div>
<div class="a" style="left:23px;top:242.9px;width:553px;height:1.2px;background:#e6e6e6;"></div>
<div class="a" style="left:23px;top:257.1px;width:553px;height:1.8px;background:#e8e8e8;"></div>
<div class="a" style="left:23px;top:271.9px;width:553px;height:16px;background:#f0f0f0;"></div>
<div class="a" style="left:23px;top:271.9px;width:553px;height:1.2px;background:#e6e6e6;"></div>
<div class="a" style="left:23px;top:286.1px;width:553px;height:1.8px;background:#e8e8e8;"></div>
<div class="a" style="left:23px;top:300.9px;width:553px;height:16px;background:#f0f0f0;"></div>
<div class="a" style="left:23px;top:300.9px;width:553px;height:1.2px;background:#e6e6e6;"></div>
<div class="a" style="left:23px;top:315.1px;width:553px;height:1.8px;background:#e8e8e8;"></div>
<div class="a" style="left:23px;top:329.9px;width:553px;height:16px;background:#f0f0f0;"></div>
<div class="a" style="left:23px;top:329.9px;width:553px;height:1.2px;background:#e6e6e6;"></div>
<div class="a" style="left:23px;top:344.1px;width:553px;height:1.8px;background:#e8e8e8;"></div>
<div class="a" style="left:23px;top:358.9px;width:553px;height:16px;background:#f0f0f0;"></div>
<div class="a" style="left:23px;top:358.9px;width:553px;height:1.2px;background:#e6e6e6;"></div>
<div class="a" style="left:23px;top:373.1px;width:553px;height:1.8px;background:#e8e8e8;"></div>
<div class="a" style="left:23px;top:387.9px;width:553px;height:16px;background:#f0f0f0;"></div>
<div class="a" style="left:23px;top:387.9px;width:553px;height:1.2px;background:#e6e6e6;"></div>
<div class="a" style="left:23px;top:402.1px;width:553px;height:1.8px;background:#e8e8e8;"></div>
<div class="a" style="left:23px;top:416.9px;width:553px;height:16px;background:#f0f0f0;"></div>
<div class="a" style="left:23px;top:416.9px;width:553px;height:1.2px;background:#e6e6e6;"></div>
<div class="a" style="left:23px;top:431.1px;width:553px;height:1.8px;background:#e8e8e8;"></div>
<div class="a" style="left:23px;top:445.9px;width:553px;height:16px;background:#f0f0f0;"></div>
<div class="a" style="left:23px;top:445.9px;width:553px;height:1.2px;background:#e6e6e6;"></div>
<div class="a" style="left:23px;top:460.1px;width:553px;height:1.8px;background:#e8e8e8;"></div>
<div class="a" style="left:23px;top:474.9px;width:553px;height:16px;background:#f0f0f0;"></div>
<div class="a" style="left:23px;top:474.9px;width:553px;height:1.2px;background:#e6e6e6;"></div>
<div class="a" style="left:23px;top:489.1px;width:553px;height:1.8px;background:#e8e8e8;"></div>
<div class="a" style="left:23px;top:503.9px;width:553px;height:16px;background:#f0f0f0;"></div>
<div class="a" style="left:23px;top:503.9px;width:553px;height:1.2px;background:#e6e6e6;"></div>
<div class="a" style="left:23px;top:518.1px;width:553px;height:1.8px;background:#e8e8e8;"></div>
<div class="a" style="left:23px;top:532.9px;width:553px;height:16px;background:#f0f0f0;"></div>
<div class="a" style="left:23px;top:532.9px;width:553px;height:1.2px;background:#e6e6e6;"></div>
<div class="a" style="left:23px;top:547.1px;width:553px;height:1.8px;background:#e8e8e8;"></div>
<div class="t" style="top:188.30px;font-size:9px;color:#505050;font-weight:normal;left:30px;transform:scaleX(0.765);transform-origin:left center;">UMSÄTZE</div>
<div class="t" style="top:188.30px;font-size:9px;color:#505050;font-weight:normal;right:827.5px;transform:scaleX(0.85);transform-origin:right center;">€</div>
<div class="t" style="top:188.30px;font-size:9px;color:#505050;font-weight:normal;right:835.5px;transform:scaleX(0.8);transform-origin:right center;">125.000,00</div>
<div class="t" style="top:188.30px;font-size:9px;color:#505050;font-weight:normal;right:764.5px;transform:scaleX(0.85);transform-origin:right center;">€</div>
<div class="t" style="top:188.30px;font-size:9px;color:#505050;font-weight:normal;right:772.5px;transform:scaleX(0.8);transform-origin:right center;">134.137,45</div>
<div class="t" style="top:188.30px;font-size:9px;color:#505050;font-weight:normal;right:701.5px;transform:scaleX(0.85);transform-origin:right center;">€</div>
<div class="t" style="top:188.30px;font-size:9px;color:#505050;font-weight:normal;right:709.5px;transform:scaleX(0.8);transform-origin:right center;">142.728,38</div>
<div class="t" style="top:188.30px;font-size:9px;color:#505050;font-weight:normal;right:638.5px;transform:scaleX(0.85);transform-origin:right center;">€</div>
<div class="t" style="top:188.30px;font-size:9px;color:#505050;font-weight:normal;right:646.5px;transform:scaleX(0.8);transform-origin:right center;">150.687,47</div>
<div class="t" style="top:188.30px;font-size:9px;color:#505050;font-weight:normal;right:575.5px;transform:scaleX(0.85);transform-origin:right center;">€</div>
<div class="t" style="top:188.30px;font-size:9px;color:#505050;font-weight:normal;right:583.5px;transform:scaleX(0.8);transform-origin:right center;">165.044,56</div>
<div class="t" style="top:188.30px;font-size:9px;color:#505050;font-weight:normal;right:512.5px;transform:scaleX(0.85);transform-origin:right center;">€</div>
<div class="t" style="top:188.30px;font-size:9px;color:#505050;font-weight:normal;right:520.5px;transform:scaleX(0.8);transform-origin:right center;">180.026,64</div>
<div class="t" style="top:188.30px;font-size:9px;color:#505050;font-weight:normal;right:455.5px;transform:scaleX(0.85);transform-origin:right center;">€</div>
<div class="t" style="top:188.30px;font-size:9px;color:#505050;font-weight:normal;right:463.5px;transform:scaleX(0.8);transform-origin:right center;">180.583,88</div>
<div class="t" style="top:202.80px;font-size:9px;color:#505050;font-weight:normal;left:30px;transform:scaleX(0.765);transform-origin:left center;">BETRIEBSAUSGABEN</div>
<div class="t" style="top:202.80px;font-size:9px;color:#505050;font-weight:normal;right:827.5px;transform:scaleX(0.85);transform-origin:right center;">€</div>
<div class="t" style="top:202.80px;font-size:9px;color:#505050;font-weight:normal;right:835.5px;transform:scaleX(0.8);transform-origin:right center;">65.000,00</div>
<div class="t" style="top:202.80px;font-size:9px;color:#505050;font-weight:normal;right:764.5px;transform:scaleX(0.85);transform-origin:right center;">€</div>
<div class="t" style="top:202.80px;font-size:9px;color:#505050;font-weight:normal;right:772.5px;transform:scaleX(0.8);transform-origin:right center;">70.962,31</div>
<div class="t" style="top:202.80px;font-size:9px;color:#505050;font-weight:normal;right:701.5px;transform:scaleX(0.85);transform-origin:right center;">€</div>
<div class="t" style="top:202.80px;font-size:9px;color:#505050;font-weight:normal;right:709.5px;transform:scaleX(0.8);transform-origin:right center;">75.924,87</div>
<div class="t" style="top:202.80px;font-size:9px;color:#505050;font-weight:normal;right:638.5px;transform:scaleX(0.85);transform-origin:right center;">€</div>
<div class="t" style="top:202.80px;font-size:9px;color:#505050;font-weight:normal;right:646.5px;transform:scaleX(0.8);transform-origin:right center;">78.901,28</div>
<div class="t" style="top:202.80px;font-size:9px;color:#505050;font-weight:normal;right:575.5px;transform:scaleX(0.85);transform-origin:right center;">€</div>
<div class="t" style="top:202.80px;font-size:9px;color:#505050;font-weight:normal;right:583.5px;transform:scaleX(0.8);transform-origin:right center;">81.674,37</div>
<div class="t" style="top:202.80px;font-size:9px;color:#505050;font-weight:normal;right:512.5px;transform:scaleX(0.85);transform-origin:right center;">€</div>
<div class="t" style="top:202.80px;font-size:9px;color:#505050;font-weight:normal;right:520.5px;transform:scaleX(0.8);transform-origin:right center;">80.883,33</div>
<div class="t" style="top:202.80px;font-size:9px;color:#505050;font-weight:normal;right:455.5px;transform:scaleX(0.85);transform-origin:right center;">€</div>
<div class="t" style="top:202.80px;font-size:9px;color:#505050;font-weight:normal;right:463.5px;transform:scaleX(0.8);transform-origin:right center;">94.419,46</div>
<div class="t" style="top:217.30px;font-size:9px;color:#505050;font-weight:normal;left:30px;transform:scaleX(0.765);transform-origin:left center;">BETRIEBSPROFIT</div>
<div class="t" style="top:217.30px;font-size:9px;color:#505050;font-weight:normal;right:827.5px;transform:scaleX(0.85);transform-origin:right center;">€</div>
<div class="t" style="top:217.30px;font-size:9px;color:#505050;font-weight:normal;right:835.5px;transform:scaleX(0.8);transform-origin:right center;">60.000,00</div>
<div class="t" style="top:217.30px;font-size:9px;color:#505050;font-weight:normal;right:764.5px;transform:scaleX(0.85);transform-origin:right center;">€</div>
<div class="t" style="top:217.30px;font-size:9px;color:#505050;font-weight:normal;right:772.5px;transform:scaleX(0.8);transform-origin:right center;">64.207,30</div>
<div class="t" style="top:217.30px;font-size:9px;color:#505050;font-weight:normal;right:701.5px;transform:scaleX(0.85);transform-origin:right center;">€</div>
<div class="t" style="top:217.30px;font-size:9px;color:#505050;font-weight:normal;right:709.5px;transform:scaleX(0.8);transform-origin:right center;">68.857,69</div>
<div class="t" style="top:217.30px;font-size:9px;color:#505050;font-weight:normal;right:638.5px;transform:scaleX(0.85);transform-origin:right center;">€</div>
<div class="t" style="top:217.30px;font-size:9px;color:#505050;font-weight:normal;right:646.5px;transform:scaleX(0.8);transform-origin:right center;">75.643,26</div>
<div class="t" style="top:217.30px;font-size:9px;color:#505050;font-weight:normal;right:575.5px;transform:scaleX(0.85);transform-origin:right center;">€</div>
<div class="t" style="top:217.30px;font-size:9px;color:#505050;font-weight:normal;right:583.5px;transform:scaleX(0.8);transform-origin:right center;">76.755,26</div>
<div class="t" style="top:217.30px;font-size:9px;color:#505050;font-weight:normal;right:512.5px;transform:scaleX(0.85);transform-origin:right center;">€</div>
<div class="t" style="top:217.30px;font-size:9px;color:#505050;font-weight:normal;right:520.5px;transform:scaleX(0.8);transform-origin:right center;">77.317,84</div>
<div class="t" style="top:217.30px;font-size:9px;color:#505050;font-weight:normal;right:455.5px;transform:scaleX(0.85);transform-origin:right center;">€</div>
<div class="t" style="top:217.30px;font-size:9px;color:#505050;font-weight:normal;right:463.5px;transform:scaleX(0.8);transform-origin:right center;">73.426,00</div>
<div class="t" style="top:231.80px;font-size:9px;color:#505050;font-weight:normal;left:30px;transform:scaleX(0.765);transform-origin:left center;">ABSCHREIBUNG</div>
<div class="t" style="top:231.80px;font-size:9px;color:#505050;font-weight:normal;right:827.5px;transform:scaleX(0.85);transform-origin:right center;">€</div>
<div class="t" style="top:231.80px;font-size:9px;color:#505050;font-weight:normal;right:835.5px;transform:scaleX(0.8);transform-origin:right center;">4.500,00</div>
<div class="t" style="top:231.80px;font-size:9px;color:#505050;font-weight:normal;right:764.5px;transform:scaleX(0.85);transform-origin:right center;">€</div>
<div class="t" style="top:231.80px;font-size:9px;color:#505050;font-weight:normal;right:772.5px;transform:scaleX(0.8);transform-origin:right center;">4.517,77</div>
<div class="t" style="top:231.80px;font-size:9px;color:#505050;font-weight:normal;right:701.5px;transform:scaleX(0.85);transform-origin:right center;">€</div>
<div class="t" style="top:231.80px;font-size:9px;color:#505050;font-weight:normal;right:709.5px;transform:scaleX(0.8);transform-origin:right center;">4.656,92</div>
<div class="t" style="top:231.80px;font-size:9px;color:#505050;font-weight:normal;right:638.5px;transform:scaleX(0.85);transform-origin:right center;">€</div>
<div class="t" style="top:231.80px;font-size:9px;color:#505050;font-weight:normal;right:646.5px;transform:scaleX(0.8);transform-origin:right center;">4.974,21</div>
<div class="t" style="top:231.80px;font-size:9px;color:#505050;font-weight:normal;right:575.5px;transform:scaleX(0.85);transform-origin:right center;">€</div>
<div class="t" style="top:231.80px;font-size:9px;color:#505050;font-weight:normal;right:583.5px;transform:scaleX(0.8);transform-origin:right center;">5.024,11</div>
<div class="t" style="top:231.80px;font-size:9px;color:#505050;font-weight:normal;right:512.5px;transform:scaleX(0.85);transform-origin:right center;">€</div>
<div class="t" style="top:231.80px;font-size:9px;color:#505050;font-weight:normal;right:520.5px;transform:scaleX(0.8);transform-origin:right center;">5.068,42</div>
<div class="t" style="top:231.80px;font-size:9px;color:#505050;font-weight:normal;right:455.5px;transform:scaleX(0.85);transform-origin:right center;">€</div>
<div class="t" style="top:231.80px;font-size:9px;color:#505050;font-weight:normal;right:463.5px;transform:scaleX(0.8);transform-origin:right center;">5.546,89</div>
<div class="t" style="top:246.30px;font-size:9px;color:#505050;font-weight:normal;left:30px;transform:scaleX(0.765);transform-origin:left center;">ZINSEN</div>
<div class="t" style="top:246.30px;font-size:9px;color:#505050;font-weight:normal;right:827.5px;transform:scaleX(0.85);transform-origin:right center;">€</div>
<div class="t" style="top:246.30px;font-size:9px;color:#505050;font-weight:normal;right:835.5px;transform:scaleX(0.8);transform-origin:right center;">2.500,00</div>
<div class="t" style="top:246.30px;font-size:9px;color:#505050;font-weight:normal;right:764.5px;transform:scaleX(0.85);transform-origin:right center;">€</div>
<div class="t" style="top:246.30px;font-size:9px;color:#505050;font-weight:normal;right:772.5px;transform:scaleX(0.8);transform-origin:right center;">2.745,82</div>
<div class="t" style="top:246.30px;font-size:9px;color:#505050;font-weight:normal;right:701.5px;transform:scaleX(0.85);transform-origin:right center;">€</div>
<div class="t" style="top:246.30px;font-size:9px;color:#505050;font-weight:normal;right:709.5px;transform:scaleX(0.8);transform-origin:right center;">2.893,11</div>
<div class="t" style="top:246.30px;font-size:9px;color:#505050;font-weight:normal;right:638.5px;transform:scaleX(0.85);transform-origin:right center;">€</div>
<div class="t" style="top:246.30px;font-size:9px;color:#505050;font-weight:normal;right:646.5px;transform:scaleX(0.8);transform-origin:right center;">3.136,13</div>
<div class="t" style="top:246.30px;font-size:9px;color:#505050;font-weight:normal;right:575.5px;transform:scaleX(0.85);transform-origin:right center;">€</div>
<div class="t" style="top:246.30px;font-size:9px;color:#505050;font-weight:normal;right:583.5px;transform:scaleX(0.8);transform-origin:right center;">3.148,53</div>
<div class="t" style="top:246.30px;font-size:9px;color:#505050;font-weight:normal;right:512.5px;transform:scaleX(0.85);transform-origin:right center;">€</div>
<div class="t" style="top:246.30px;font-size:9px;color:#505050;font-weight:normal;right:520.5px;transform:scaleX(0.8);transform-origin:right center;">3.338,31</div>
<div class="t" style="top:246.30px;font-size:9px;color:#505050;font-weight:normal;right:455.5px;transform:scaleX(0.85);transform-origin:right center;">€</div>
<div class="t" style="top:246.30px;font-size:9px;color:#505050;font-weight:normal;right:463.5px;transform:scaleX(0.8);transform-origin:right center;">3.789,47</div>
<div class="t" style="top:260.80px;font-size:9px;color:#505050;font-weight:normal;left:30px;transform:scaleX(0.765);transform-origin:left center;">NETTOGEWINN</div>
<div class="t" style="top:260.80px;font-size:9px;color:#505050;font-weight:normal;right:827.5px;transform:scaleX(0.85);transform-origin:right center;">€</div>
<div class="t" style="top:260.80px;font-size:9px;color:#505050;font-weight:normal;right:835.5px;transform:scaleX(0.8);transform-origin:right center;">54.000,00</div>
<div class="t" style="top:260.80px;font-size:9px;color:#505050;font-weight:normal;right:764.5px;transform:scaleX(0.85);transform-origin:right center;">€</div>
<div class="t" style="top:260.80px;font-size:9px;color:#505050;font-weight:normal;right:772.5px;transform:scaleX(0.8);transform-origin:right center;">54.761,08</div>
<div class="t" style="top:260.80px;font-size:9px;color:#505050;font-weight:normal;right:701.5px;transform:scaleX(0.85);transform-origin:right center;">€</div>
<div class="t" style="top:260.80px;font-size:9px;color:#505050;font-weight:normal;right:709.5px;transform:scaleX(0.8);transform-origin:right center;">55.860,82</div>
<div class="t" style="top:260.80px;font-size:9px;color:#505050;font-weight:normal;right:638.5px;transform:scaleX(0.85);transform-origin:right center;">€</div>
<div class="t" style="top:260.80px;font-size:9px;color:#505050;font-weight:normal;right:646.5px;transform:scaleX(0.8);transform-origin:right center;">59.747,96</div>
<div class="t" style="top:260.80px;font-size:9px;color:#505050;font-weight:normal;right:575.5px;transform:scaleX(0.85);transform-origin:right center;">€</div>
<div class="t" style="top:260.80px;font-size:9px;color:#505050;font-weight:normal;right:583.5px;transform:scaleX(0.8);transform-origin:right center;">61.483,59</div>
<div class="t" style="top:260.80px;font-size:9px;color:#505050;font-weight:normal;right:512.5px;transform:scaleX(0.85);transform-origin:right center;">€</div>
<div class="t" style="top:260.80px;font-size:9px;color:#505050;font-weight:normal;right:520.5px;transform:scaleX(0.8);transform-origin:right center;">66.272,10</div>
<div class="t" style="top:260.80px;font-size:9px;color:#505050;font-weight:normal;right:455.5px;transform:scaleX(0.85);transform-origin:right center;">€</div>
<div class="t" style="top:260.80px;font-size:9px;color:#505050;font-weight:normal;right:463.5px;transform:scaleX(0.8);transform-origin:right center;">67.474,86</div>
<div class="t" style="top:275.30px;font-size:9px;color:#505050;font-weight:normal;left:30px;transform:scaleX(0.765);transform-origin:left center;">STEUER</div>
<div class="t" style="top:275.30px;font-size:9px;color:#505050;font-weight:normal;right:827.5px;transform:scaleX(0.85);transform-origin:right center;">€</div>
<div class="t" style="top:275.30px;font-size:9px;color:#505050;font-weight:normal;right:835.5px;transform:scaleX(0.8);transform-origin:right center;">22.000,00</div>
<div class="t" style="top:275.30px;font-size:9px;color:#505050;font-weight:normal;right:764.5px;transform:scaleX(0.85);transform-origin:right center;">€</div>
<div class="t" style="top:275.30px;font-size:9px;color:#505050;font-weight:normal;right:772.5px;transform:scaleX(0.8);transform-origin:right center;">23.920,55</div>
<div class="t" style="top:275.30px;font-size:9px;color:#505050;font-weight:normal;right:701.5px;transform:scaleX(0.85);transform-origin:right center;">€</div>
<div class="t" style="top:275.30px;font-size:9px;color:#505050;font-weight:normal;right:709.5px;transform:scaleX(0.8);transform-origin:right center;">25.576,74</div>
<div class="t" style="top:275.30px;font-size:9px;color:#505050;font-weight:normal;right:638.5px;transform:scaleX(0.85);transform-origin:right center;">€</div>
<div class="t" style="top:275.30px;font-size:9px;color:#505050;font-weight:normal;right:646.5px;transform:scaleX(0.8);transform-origin:right center;">27.498,86</div>
<div class="t" style="top:275.30px;font-size:9px;color:#505050;font-weight:normal;right:575.5px;transform:scaleX(0.85);transform-origin:right center;">€</div>
<div class="t" style="top:275.30px;font-size:9px;color:#505050;font-weight:normal;right:583.5px;transform:scaleX(0.8);transform-origin:right center;">28.335,68</div>
<div class="t" style="top:275.30px;font-size:9px;color:#505050;font-weight:normal;right:512.5px;transform:scaleX(0.85);transform-origin:right center;">€</div>
<div class="t" style="top:275.30px;font-size:9px;color:#505050;font-weight:normal;right:520.5px;transform:scaleX(0.8);transform-origin:right center;">29.424,53</div>
<div class="t" style="top:275.30px;font-size:9px;color:#505050;font-weight:normal;right:455.5px;transform:scaleX(0.85);transform-origin:right center;">€</div>
<div class="t" style="top:275.30px;font-size:9px;color:#505050;font-weight:normal;right:463.5px;transform:scaleX(0.8);transform-origin:right center;">31.408,26</div>
<div class="t" style="top:289.80px;font-size:9px;color:#505050;font-weight:normal;left:30px;transform:scaleX(0.765);transform-origin:left center;">GEWINN  NACH  STEUER</div>
<div class="t" style="top:289.80px;font-size:9px;color:#505050;font-weight:normal;right:827.5px;transform:scaleX(0.85);transform-origin:right center;">€</div>
<div class="t" style="top:289.80px;font-size:9px;color:#505050;font-weight:normal;right:835.5px;transform:scaleX(0.8);transform-origin:right center;">32.000,00</div>
<div class="t" style="top:289.80px;font-size:9px;color:#505050;font-weight:normal;right:764.5px;transform:scaleX(0.85);transform-origin:right center;">€</div>
<div class="t" style="top:289.80px;font-size:9px;color:#505050;font-weight:normal;right:772.5px;transform:scaleX(0.8);transform-origin:right center;">34.943,49</div>
<div class="t" style="top:289.80px;font-size:9px;color:#505050;font-weight:normal;right:701.5px;transform:scaleX(0.85);transform-origin:right center;">€</div>
<div class="t" style="top:289.80px;font-size:9px;color:#505050;font-weight:normal;right:709.5px;transform:scaleX(0.8);transform-origin:right center;">38.418,53</div>
<div class="t" style="top:289.80px;font-size:9px;color:#505050;font-weight:normal;right:638.5px;transform:scaleX(0.85);transform-origin:right center;">€</div>
<div class="t" style="top:289.80px;font-size:9px;color:#505050;font-weight:normal;right:646.5px;transform:scaleX(0.8);transform-origin:right center;">39.895,05</div>
<div class="t" style="top:289.80px;font-size:9px;color:#505050;font-weight:normal;right:575.5px;transform:scaleX(0.85);transform-origin:right center;">€</div>
<div class="t" style="top:289.80px;font-size:9px;color:#505050;font-weight:normal;right:583.5px;transform:scaleX(0.8);transform-origin:right center;">40.607,74</div>
<div class="t" style="top:289.80px;font-size:9px;color:#505050;font-weight:normal;right:512.5px;transform:scaleX(0.85);transform-origin:right center;">€</div>
<div class="t" style="top:289.80px;font-size:9px;color:#505050;font-weight:normal;right:520.5px;transform:scaleX(0.8);transform-origin:right center;">42.438,20</div>
<div class="t" style="top:289.80px;font-size:9px;color:#505050;font-weight:normal;right:455.5px;transform:scaleX(0.85);transform-origin:right center;">€</div>
<div class="t" style="top:289.80px;font-size:9px;color:#505050;font-weight:normal;right:463.5px;transform:scaleX(0.8);transform-origin:right center;">50.247,68</div>
<div class="t" style="top:304.30px;font-size:9px;color:#505050;font-weight:normal;left:30px;transform:scaleX(0.765);transform-origin:left center;">METRIK  1</div>
<div class="t" style="top:304.30px;font-size:9px;color:#505050;font-weight:normal;right:827.5px;transform:scaleX(0.85);transform-origin:right center;">€</div>
<div class="t" style="top:304.30px;font-size:9px;color:#505050;font-weight:normal;right:835.5px;transform:scaleX(0.8);transform-origin:right center;">12,80</div>
<div class="t" style="top:304.30px;font-size:9px;color:#505050;font-weight:normal;right:764.5px;transform:scaleX(0.85);transform-origin:right center;">€</div>
<div class="t" style="top:304.30px;font-size:9px;color:#505050;font-weight:normal;right:772.5px;transform:scaleX(0.8);transform-origin:right center;">12,81</div>
<div class="t" style="top:304.30px;font-size:9px;color:#505050;font-weight:normal;right:701.5px;transform:scaleX(0.85);transform-origin:right center;">€</div>
<div class="t" style="top:304.30px;font-size:9px;color:#505050;font-weight:normal;right:709.5px;transform:scaleX(0.8);transform-origin:right center;">13,78</div>
<div class="t" style="top:304.30px;font-size:9px;color:#505050;font-weight:normal;right:638.5px;transform:scaleX(0.85);transform-origin:right center;">€</div>
<div class="t" style="top:304.30px;font-size:9px;color:#505050;font-weight:normal;right:646.5px;transform:scaleX(0.8);transform-origin:right center;">14,29</div>
<div class="t" style="top:304.30px;font-size:9px;color:#505050;font-weight:normal;right:575.5px;transform:scaleX(0.85);transform-origin:right center;">€</div>
<div class="t" style="top:304.30px;font-size:9px;color:#505050;font-weight:normal;right:583.5px;transform:scaleX(0.8);transform-origin:right center;">15,58</div>
<div class="t" style="top:304.30px;font-size:9px;color:#505050;font-weight:normal;right:512.5px;transform:scaleX(0.85);transform-origin:right center;">€</div>
<div class="t" style="top:304.30px;font-size:9px;color:#505050;font-weight:normal;right:520.5px;transform:scaleX(0.8);transform-origin:right center;">16,79</div>
<div class="t" style="top:304.30px;font-size:9px;color:#505050;font-weight:normal;right:455.5px;transform:scaleX(0.85);transform-origin:right center;">€</div>
<div class="t" style="top:304.30px;font-size:9px;color:#505050;font-weight:normal;right:463.5px;transform:scaleX(0.8);transform-origin:right center;">19,96</div>
<div class="t" style="top:318.80px;font-size:9px;color:#505050;font-weight:normal;left:30px;transform:scaleX(0.765);transform-origin:left center;">METRIK  2</div>
<div class="t" style="top:318.80px;font-size:9px;color:#505050;font-weight:normal;right:827.5px;transform:scaleX(0.85);transform-origin:right center;">€</div>
<div class="t" style="top:318.80px;font-size:9px;color:#505050;font-weight:normal;right:835.5px;transform:scaleX(0.8);transform-origin:right center;">18,20</div>
<div class="t" style="top:318.80px;font-size:9px;color:#505050;font-weight:normal;right:764.5px;transform:scaleX(0.85);transform-origin:right center;">€</div>
<div class="t" style="top:318.80px;font-size:9px;color:#505050;font-weight:normal;right:772.5px;transform:scaleX(0.8);transform-origin:right center;">18,59</div>
<div class="t" style="top:318.80px;font-size:9px;color:#505050;font-weight:normal;right:701.5px;transform:scaleX(0.85);transform-origin:right center;">€</div>
<div class="t" style="top:318.80px;font-size:9px;color:#505050;font-weight:normal;right:709.5px;transform:scaleX(0.8);transform-origin:right center;">19,22</div>
<div class="t" style="top:318.80px;font-size:9px;color:#505050;font-weight:normal;right:638.5px;transform:scaleX(0.85);transform-origin:right center;">€</div>
<div class="t" style="top:318.80px;font-size:9px;color:#505050;font-weight:normal;right:646.5px;transform:scaleX(0.8);transform-origin:right center;">20,17</div>
<div class="t" style="top:318.80px;font-size:9px;color:#505050;font-weight:normal;right:575.5px;transform:scaleX(0.85);transform-origin:right center;">€</div>
<div class="t" style="top:318.80px;font-size:9px;color:#505050;font-weight:normal;right:583.5px;transform:scaleX(0.8);transform-origin:right center;">20,48</div>
<div class="t" style="top:318.80px;font-size:9px;color:#505050;font-weight:normal;right:512.5px;transform:scaleX(0.85);transform-origin:right center;">€</div>
<div class="t" style="top:318.80px;font-size:9px;color:#505050;font-weight:normal;right:520.5px;transform:scaleX(0.8);transform-origin:right center;">21,84</div>
<div class="t" style="top:318.80px;font-size:9px;color:#505050;font-weight:normal;right:455.5px;transform:scaleX(0.85);transform-origin:right center;">€</div>
<div class="t" style="top:318.80px;font-size:9px;color:#505050;font-weight:normal;right:463.5px;transform:scaleX(0.8);transform-origin:right center;">26,02</div>
<div class="t" style="top:333.30px;font-size:9px;color:#505050;font-weight:normal;left:30px;transform:scaleX(0.765);transform-origin:left center;">METRIK  3</div>
<div class="t" style="top:333.30px;font-size:9px;color:#505050;font-weight:normal;right:827.5px;transform:scaleX(0.85);transform-origin:right center;">€</div>
<div class="t" style="top:333.30px;font-size:9px;color:#505050;font-weight:normal;right:835.5px;transform:scaleX(0.8);transform-origin:right center;">19,10</div>
<div class="t" style="top:333.30px;font-size:9px;color:#505050;font-weight:normal;right:764.5px;transform:scaleX(0.85);transform-origin:right center;">€</div>
<div class="t" style="top:333.30px;font-size:9px;color:#505050;font-weight:normal;right:772.5px;transform:scaleX(0.8);transform-origin:right center;">20,56</div>
<div class="t" style="top:333.30px;font-size:9px;color:#505050;font-weight:normal;right:701.5px;transform:scaleX(0.85);transform-origin:right center;">€</div>
<div class="t" style="top:333.30px;font-size:9px;color:#505050;font-weight:normal;right:709.5px;transform:scaleX(0.8);transform-origin:right center;">21,87</div>
<div class="t" style="top:333.30px;font-size:9px;color:#505050;font-weight:normal;right:638.5px;transform:scaleX(0.85);transform-origin:right center;">€</div>
<div class="t" style="top:333.30px;font-size:9px;color:#505050;font-weight:normal;right:646.5px;transform:scaleX(0.8);transform-origin:right center;">23,19</div>
<div class="t" style="top:333.30px;font-size:9px;color:#505050;font-weight:normal;right:575.5px;transform:scaleX(0.85);transform-origin:right center;">€</div>
<div class="t" style="top:333.30px;font-size:9px;color:#505050;font-weight:normal;right:583.5px;transform:scaleX(0.8);transform-origin:right center;">24,68</div>
<div class="t" style="top:333.30px;font-size:9px;color:#505050;font-weight:normal;right:512.5px;transform:scaleX(0.85);transform-origin:right center;">€</div>
<div class="t" style="top:333.30px;font-size:9px;color:#505050;font-weight:normal;right:520.5px;transform:scaleX(0.8);transform-origin:right center;">26,40</div>
<div class="t" style="top:333.30px;font-size:9px;color:#505050;font-weight:normal;right:455.5px;transform:scaleX(0.85);transform-origin:right center;">€</div>
<div class="t" style="top:333.30px;font-size:9px;color:#505050;font-weight:normal;right:463.5px;transform:scaleX(0.8);transform-origin:right center;">31,09</div>
<div class="t" style="top:347.80px;font-size:9px;color:#505050;font-weight:normal;left:30px;transform:scaleX(0.765);transform-origin:left center;">METRIK  4</div>
<div class="t" style="top:347.80px;font-size:9px;color:#505050;font-weight:normal;right:827.5px;transform:scaleX(0.85);transform-origin:right center;">€</div>
<div class="t" style="top:347.80px;font-size:9px;color:#505050;font-weight:normal;right:835.5px;transform:scaleX(0.8);transform-origin:right center;">12,10</div>
<div class="t" style="top:347.80px;font-size:9px;color:#505050;font-weight:normal;right:764.5px;transform:scaleX(0.85);transform-origin:right center;">€</div>
<div class="t" style="top:347.80px;font-size:9px;color:#505050;font-weight:normal;right:772.5px;transform:scaleX(0.8);transform-origin:right center;">12,22</div>
<div class="t" style="top:347.80px;font-size:9px;color:#505050;font-weight:normal;right:701.5px;transform:scaleX(0.85);transform-origin:right center;">€</div>
<div class="t" style="top:347.80px;font-size:9px;color:#505050;font-weight:normal;right:709.5px;transform:scaleX(0.8);transform-origin:right center;">12,59</div>
<div class="t" style="top:347.80px;font-size:9px;color:#505050;font-weight:normal;right:638.5px;transform:scaleX(0.85);transform-origin:right center;">€</div>
<div class="t" style="top:347.80px;font-size:9px;color:#505050;font-weight:normal;right:646.5px;transform:scaleX(0.8);transform-origin:right center;">13,71</div>
<div class="t" style="top:347.80px;font-size:9px;color:#505050;font-weight:normal;right:575.5px;transform:scaleX(0.85);transform-origin:right center;">€</div>
<div class="t" style="top:347.80px;font-size:9px;color:#505050;font-weight:normal;right:583.5px;transform:scaleX(0.8);transform-origin:right center;">13,76</div>
<div class="t" style="top:347.80px;font-size:9px;color:#505050;font-weight:normal;right:512.5px;transform:scaleX(0.85);transform-origin:right center;">€</div>
<div class="t" style="top:347.80px;font-size:9px;color:#505050;font-weight:normal;right:520.5px;transform:scaleX(0.8);transform-origin:right center;">14,59</div>
<div class="t" style="top:347.80px;font-size:9px;color:#505050;font-weight:normal;right:455.5px;transform:scaleX(0.85);transform-origin:right center;">€</div>
<div class="t" style="top:347.80px;font-size:9px;color:#505050;font-weight:normal;right:463.5px;transform:scaleX(0.8);transform-origin:right center;">14,92</div>
<div class="t" style="top:362.30px;font-size:9px;color:#505050;font-weight:normal;left:30px;transform:scaleX(0.765);transform-origin:left center;">METRIK  5</div>
<div class="t" style="top:362.30px;font-size:9px;color:#505050;font-weight:normal;right:827.5px;transform:scaleX(0.85);transform-origin:right center;">€</div>
<div class="t" style="top:362.30px;font-size:9px;color:#505050;font-weight:normal;right:835.5px;transform:scaleX(0.8);transform-origin:right center;">0,75</div>
<div class="t" style="top:362.30px;font-size:9px;color:#505050;font-weight:normal;right:764.5px;transform:scaleX(0.85);transform-origin:right center;">€</div>
<div class="t" style="top:362.30px;font-size:9px;color:#505050;font-weight:normal;right:772.5px;transform:scaleX(0.8);transform-origin:right center;">0,79</div>
<div class="t" style="top:362.30px;font-size:9px;color:#505050;font-weight:normal;right:701.5px;transform:scaleX(0.85);transform-origin:right center;">€</div>
<div class="t" style="top:362.30px;font-size:9px;color:#505050;font-weight:normal;right:709.5px;transform:scaleX(0.8);transform-origin:right center;">0,85</div>
<div class="t" style="top:362.30px;font-size:9px;color:#505050;font-weight:normal;right:638.5px;transform:scaleX(0.85);transform-origin:right center;">€</div>
<div class="t" style="top:362.30px;font-size:9px;color:#505050;font-weight:normal;right:646.5px;transform:scaleX(0.8);transform-origin:right center;">0,89</div>
<div class="t" style="top:362.30px;font-size:9px;color:#505050;font-weight:normal;right:575.5px;transform:scaleX(0.85);transform-origin:right center;">€</div>
<div class="t" style="top:362.30px;font-size:9px;color:#505050;font-weight:normal;right:583.5px;transform:scaleX(0.8);transform-origin:right center;">0,92</div>
<div class="t" style="top:362.30px;font-size:9px;color:#505050;font-weight:normal;right:512.5px;transform:scaleX(0.85);transform-origin:right center;">€</div>
<div class="t" style="top:362.30px;font-size:9px;color:#505050;font-weight:normal;right:520.5px;transform:scaleX(0.8);transform-origin:right center;">1,00</div>
<div class="t" style="top:362.30px;font-size:9px;color:#505050;font-weight:normal;right:455.5px;transform:scaleX(0.85);transform-origin:right center;">€</div>
<div class="t" style="top:362.30px;font-size:9px;color:#505050;font-weight:normal;right:463.5px;transform:scaleX(0.8);transform-origin:right center;">1,04</div>
<div class="t" style="top:376.80px;font-size:9px;color:#505050;font-weight:normal;left:30px;transform:scaleX(0.765);transform-origin:left center;">METRIK  6</div>
<div class="t" style="top:376.80px;font-size:9px;color:#505050;font-weight:normal;right:827.5px;transform:scaleX(0.85);transform-origin:right center;">€</div>
<div class="t" style="top:376.80px;font-size:9px;color:#505050;font-weight:normal;right:835.5px;transform:scaleX(0.8);transform-origin:right center;">0,23</div>
<div class="t" style="top:376.80px;font-size:9px;color:#505050;font-weight:normal;right:764.5px;transform:scaleX(0.85);transform-origin:right center;">€</div>
<div class="t" style="top:376.80px;font-size:9px;color:#505050;font-weight:normal;right:772.5px;transform:scaleX(0.8);transform-origin:right center;">0,25</div>
<div class="t" style="top:376.80px;font-size:9px;color:#505050;font-weight:normal;right:701.5px;transform:scaleX(0.85);transform-origin:right center;">€</div>
<div class="t" style="top:376.80px;font-size:9px;color:#505050;font-weight:normal;right:709.5px;transform:scaleX(0.8);transform-origin:right center;">0,27</div>
<div class="t" style="top:376.80px;font-size:9px;color:#505050;font-weight:normal;right:638.5px;transform:scaleX(0.85);transform-origin:right center;">€</div>
<div class="t" style="top:376.80px;font-size:9px;color:#505050;font-weight:normal;right:646.5px;transform:scaleX(0.8);transform-origin:right center;">0,28</div>
<div class="t" style="top:376.80px;font-size:9px;color:#505050;font-weight:normal;right:575.5px;transform:scaleX(0.85);transform-origin:right center;">€</div>
<div class="t" style="top:376.80px;font-size:9px;color:#505050;font-weight:normal;right:583.5px;transform:scaleX(0.8);transform-origin:right center;">0,30</div>
<div class="t" style="top:376.80px;font-size:9px;color:#505050;font-weight:normal;right:512.5px;transform:scaleX(0.85);transform-origin:right center;">€</div>
<div class="t" style="top:376.80px;font-size:9px;color:#505050;font-weight:normal;right:520.5px;transform:scaleX(0.8);transform-origin:right center;">0,31</div>
<div class="t" style="top:376.80px;font-size:9px;color:#505050;font-weight:normal;right:455.5px;transform:scaleX(0.85);transform-origin:right center;">€</div>
<div class="t" style="top:376.80px;font-size:9px;color:#505050;font-weight:normal;right:463.5px;transform:scaleX(0.8);transform-origin:right center;">0,34</div>
<div class="a" style="left:1017px;top:133px;width:5px;height:536px;background:#9e9e9e;border-radius:3px;"></div>
<div class="a" style="left:0px;top:676.5px;width:1024px;height:1px;background:#d9d9d9;"></div>
<div class="a" style="left:0px;top:677.5px;width:1024px;height:17px;background:#efefef;"></div>
<div class="a" style="left:0px;top:692.5px;width:1024px;height:1px;background:#f8f8f8;"></div>
<svg style="left:10px;top:681px;" width="6" height="10" viewBox="0 0 6 10"><path d="M5 1.5 L1 5 L5 8.5 Z" fill="#c4c4c4"/></svg>
<svg style="left:25px;top:681px;" width="6" height="10" viewBox="0 0 6 10"><path d="M1 1.5 L5 5 L1 8.5 Z" fill="#c4c4c4"/></svg>
<div class="a" style="left:44px;top:679.5px;width:72px;height:13px;background:#4fb86b;box-shadow:0 0 0 0.6px #bfe6cb;"></div>
<div class="t" style="top:682.20px;font-size:9px;color:#163d22;font-weight:bold;left:80px;transform:translateX(-50%) scaleX(0.8887);transform-origin:center center;">Finanzbericht</div>
<div class="a" style="left:119px;top:679.5px;width:108px;height:13px;background:#e3f1e7;background:linear-gradient(#f2f8f4,#dcefe2);"></div>
<div class="t" style="top:682.20px;font-size:9px;color:#2f7f4f;font-weight:bold;left:173px;transform:translateX(-50%) scaleX(0.911);transform-origin:center center;">Eingabe Finanzdaten</div>
<div class="a" style="left:231px;top:679.5px;width:149px;height:13px;background:#1f6b37;"></div>
<div class="t" style="top:682.20px;font-size:9px;color:#ffffff;font-weight:bold;left:305.5px;transform:translateX(-50%) scaleX(0.8785);transform-origin:center center;">Einstellungen wicht. Kennzahlen</div>
<div class="t" style="top:680.30px;font-size:12px;color:#333;font-weight:bold;left:395.8px;transform:translateX(-50%);transform-origin:left center;">+</div>
<div class="a" style="left:410px;top:679px;width:1px;height:14px;background:#d8d8d8;"></div>
<div class="a" style="left:0px;top:694.5px;width:1024px;height:1px;background:#c8c8c8;"></div>
<div class="a" style="left:0px;top:695.5px;width:1024px;height:15.5px;background:#d4d4d4;background:linear-gradient(#dedede,#c2c2c2);"></div>
<div class="t" style="top:699.00px;font-size:9px;color:#6e6e6e;font-weight:bold;left:17px;transform:scaleX(0.8622);transform-origin:left center;">Bereit</div>
<svg style="left:52px;top:697px;" width="14" height="12" viewBox="0 0 14 12"><path d="M3 2.5 H11 M7 2.5 V9.5 M4 9.5 H10" stroke="#666" stroke-width="1.3"/><circle cx="3" cy="2.5" r="1.2" fill="#666"/><circle cx="11" cy="2.5" r="1.2" fill="#666"/></svg>
<svg style="left:74px;top:697px;" width="12" height="12" viewBox="0 0 12 12"><circle cx="6" cy="2" r="1.4" fill="none" stroke="#888"/><path d="M1 4 H11 M6 4 V8 L3 11 M6 8 L9 11" fill="none" stroke="#888" stroke-width="1"/></svg>
<div class="t" style="top:699.00px;font-size:9px;color:#707070;font-weight:bold;left:88px;transform:scaleX(0.8957);transform-origin:left center;">Barrierefreiheit: Untersuchen</div>
<div class="a" style="left:801px;top:696px;width:25px;height:15px;background:#c2c2c2;"></div>
<svg style="left:807px;top:699px;" width="12" height="10" viewBox="0 0 12 10"><path d="M1 1 H11 V9 H1 Z M1 3.7 H11 M1 6.3 H11 M4.3 1 V9 M7.7 1 V9" fill="none" stroke="#f0f0f0" stroke-width="0.8"/></svg>
<svg style="left:832px;top:698px;" width="12" height="11" viewBox="0 0 12 11"><rect x="1" y="1" width="10" height="9" fill="#b5b5b5" stroke="#8a8a8a" stroke-width="0.8"/></svg>
<svg style="left:857px;top:698px;" width="12" height="11" viewBox="0 0 12 11"><rect x="1" y="1" width="10" height="9" fill="none" stroke="#888" stroke-width="0.9"/><path d="M3.5 1 V5 H8.5 V1" fill="none" stroke="#888" stroke-width="0.8"/></svg>
<div class="a" style="left:880.5px;top:702.8px;width:5px;height:1.4px;background:#666;"></div>
<div class="a" style="left:892px;top:702.5px;width:68px;height:2px;background:#8d8d8d;border-radius:1px;"></div>
<svg style="left:921px;top:697px;" width="12" height="12" viewBox="0 0 12 12"><circle cx="6" cy="6" r="5" fill="#f6f6f6" stroke="#cfcfcf" stroke-width="0.6"/></svg>
<svg style="left:965px;top:699.5px;" width="6" height="6" viewBox="0 0 6 6"><path d="M3 0.3 V5.7 M0.3 3 H5.7" stroke="#555" stroke-width="1.2"/></svg>
<div class="t" style="top:698.50px;font-size:9px;color:#555;font-weight:bold;left:984px;transform:scaleX(0.8764);transform-origin:left center;">111 %</div>
<svg style="left:0px;top:705px;" width="6" height="6" viewBox="0 0 6 6"><path d="M0 0 V6 H6 A6 6 0 0 1 0 0 Z" fill="#1a1a1a"/></svg>
<svg style="left:1017px;top:704px;" width="7" height="7" viewBox="0 0 7 7"><path d="M7 0 V7 H0 A7 7 0 0 0 7 0 Z" fill="#1a1a1a"/></svg>
<svg style="left:592px;top:176px;" width="10" height="14" viewBox="0 0 10 14"><path d="M1 1 V11 L3.5 8.5 L5.5 12.5 L7 11.8 L5 8 H8.5 Z" fill="#111" stroke="#fff" stroke-width="0.8"/></svg>
</body></html>
